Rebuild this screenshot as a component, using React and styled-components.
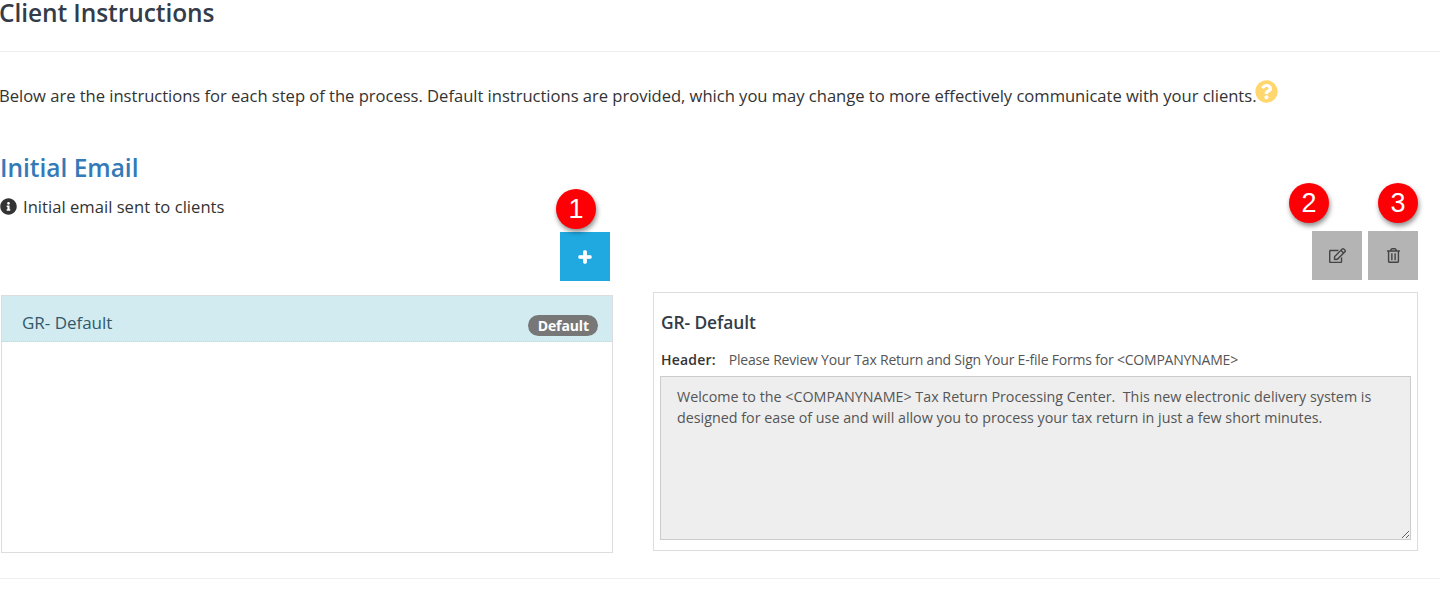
import React from 'react';
import styled, { createGlobalStyle } from 'styled-components';
import { FaInfoCircle, FaPlus, FaQuestionCircle, FaRegEdit, FaRegTrashAlt } from 'react-icons/fa';

const GlobalStyle = createGlobalStyle`
  html, body {
    margin: 0;
    padding: 0;
    background: #fff;
    overflow: hidden;
  }
  body {
    font-family: "Open Sans", "Noto Sans", sans-serif;
    color: #333;
  }
`;

const Page = styled.div`
  width: 1440px;
  height: 616px;
  overflow: hidden;
`;

const PageHeader = styled.div`
  height: 51px;
  border-bottom: 1px solid #eee;
`;

const PageTitle = styled.h3`
  margin: 0 0 0 -1px;
  font-size: 24.5px;
  font-weight: 600;
  line-height: 26px;
  letter-spacing: -0.08px;
  color: #333c48;
`;

const Intro = styled.p`
  display: flex;
  align-items: flex-start;
  margin: 0 0 0 -1px;
  padding-top: 31px;
  height: 68px;
  box-sizing: content-box;
  font-size: 16.6px;
  line-height: 26px;
  letter-spacing: -0.03px;
  white-space: nowrap;
  color: #333;
`;

const HelpIcon = styled(FaQuestionCircle)`
  margin: -3px 0 0 -1px;
  font-size: 23px;
  color: #ffd76e;
`;

const SectionTitle = styled.h3`
  margin: 0;
  font-size: 24.5px;
  font-weight: 600;
  line-height: 34px;
  letter-spacing: -0.02px;
  color: #337ab7;
`;

const Columns = styled.div`
  display: grid;
  grid-template-columns: 613px 765px;
  column-gap: 40px;
`;

const LeftColumn = styled.div`
  display: flex;
  flex-direction: column;
`;

const RightColumn = styled.div`
  display: flex;
  flex-direction: column;
  padding-top: 46px;
`;

const InfoLine = styled.div`
  display: flex;
  align-items: center;
  gap: 6px;
  height: 26px;
  margin: 8px 0 13px;
  font-size: 16.6px;
  letter-spacing: 0.02px;
  color: #333;
`;

const InfoIcon = styled(FaInfoCircle)`
  font-size: 17px;
  color: #333;
`;

const Toolbar = styled.div`
  display: flex;
  justify-content: flex-end;
  gap: 6px;
  padding-right: ${(p) => p.$inset || 0}px;
`;

const ToolButton = styled.button`
  position: relative;
  display: flex;
  align-items: center;
  justify-content: center;
  width: 50px;
  height: 49px;
  padding: 0;
  border: none;
  color: ${(p) => (p.$primary ? '#fff' : '#444')};
  background: ${(p) => (p.$primary ? '#20a8e0' : '#b4b4b4')};
`;

const PlusIcon = styled(FaPlus)`
  font-size: 14px;
  stroke: #fff;
  stroke-width: 40;
`;

const EditIcon = styled(FaRegEdit)`
  font-size: 17px;
`;

const TrashIcon = styled(FaRegTrashAlt)`
  font-size: 15px;
`;

const StepBadge = styled.span`
  position: absolute;
  top: ${(p) => p.$top}px;
  left: ${(p) => p.$left}px;
  width: 40px;
  height: 40px;
  border-radius: 50%;
  background: #fd0006;
  color: #fff;
  font-family: "Liberation Sans", Arial, sans-serif;
  font-size: 27px;
  line-height: 40px;
  text-align: center;
  box-shadow: 1px 3px 5px rgba(0, 0, 0, 0.45);
`;

const ListBox = styled.div`
  height: 256px;
  margin: 14px 0 0 1px;
  border: 1px solid #ddd;
`;

const ListItem = styled.div`
  position: relative;
  height: 46px;
  box-sizing: border-box;
  padding: 15px 20px 0;
  background: #d1ebf0;
  border: 1px dotted #b5dbe6;
  border-width: 0 0 1px;
  font-size: 17px;
  line-height: 24px;
  letter-spacing: -0.02px;
  color: #31596a;
`;

const DefaultTag = styled.span`
  position: absolute;
  right: 14px;
  top: 19px;
  height: 21px;
  padding: 0 9px 0 10px;
  border-radius: 11px;
  background: #777;
  color: #fff;
  font-size: 14px;
  font-weight: 700;
  line-height: 21px;
  letter-spacing: -0.1px;
`;

const DetailBox = styled.div`
  height: 259px;
  margin-top: 12px;
  box-sizing: border-box;
  padding: 17px 6px 10px;
  border: 1px solid #ddd;
`;

const DetailTitle = styled.h4`
  margin: 0;
  padding-left: 1px;
  font-size: 17.4px;
  font-weight: 600;
  line-height: 24px;
  letter-spacing: -0.1px;
  color: #333c48;
`;

const HeaderRow = styled.div`
  display: flex;
  gap: 13px;
  margin-top: 16px;
  padding-left: 1px;
  font-size: 14px;
  line-height: 20px;
  letter-spacing: -0.2px;
  white-space: nowrap;
  color: #555;
`;

const HeaderLabel = styled.strong`
  font-weight: 600;
  letter-spacing: 0.2px;
  color: #333;
`;

const MessageArea = styled.textarea`
  display: block;
  width: 751px;
  height: 164px;
  margin-top: 6px;
  box-sizing: border-box;
  padding: 9px 16px;
  border: 1px solid #ccc;
  border-radius: 0;
  outline: none;
  background: #eee;
  color: #555;
  font-family: "Open Sans", "Noto Sans", sans-serif;
  font-size: 14.3px;
  line-height: 21px;
  resize: both;
`;

const BottomRule = styled.hr`
  margin: 25px 0 0;
  border: none;
  border-top: 1px solid #eee;
`;

const message =
  'Welcome to the <COMPANYNAME> Tax Return Processing Center.  This new electronic delivery system is designed for ease of use and will allow you to process your tax return in just a few short minutes.';

export default function App() {
  return (
    <Page>
      <GlobalStyle />
      <PageHeader>
        <PageTitle>Client Instructions</PageTitle>
      </PageHeader>
      <Intro>
        Below are the instructions for each step of the process. Default instructions are provided, which you may change to more effectively communicate with your clients.
        <HelpIcon />
      </Intro>
      <SectionTitle>Initial Email</SectionTitle>
      <Columns>
        <LeftColumn>
          <InfoLine>
            <InfoIcon />
            Initial email sent to clients
          </InfoLine>
          <Toolbar $inset={3}>
            <ToolButton $primary>
              <StepBadge $top={-43} $left={-4}>1</StepBadge>
              <PlusIcon />
            </ToolButton>
          </Toolbar>
          <ListBox>
            <ListItem>
              GR- Default
              <DefaultTag>Default</DefaultTag>
            </ListItem>
          </ListBox>
        </LeftColumn>
        <RightColumn>
          <Toolbar>
            <ToolButton>
              <StepBadge $top={-48} $left={-23}>2</StepBadge>
              <EditIcon />
            </ToolButton>
            <ToolButton>
              <StepBadge $top={-48} $left={10}>3</StepBadge>
              <TrashIcon />
            </ToolButton>
          </Toolbar>
          <DetailBox>
            <DetailTitle>GR- Default</DetailTitle>
            <HeaderRow>
              <HeaderLabel>Header:</HeaderLabel>
              Please Review Your Tax Return and Sign Your E-file Forms for &lt;COMPANYNAME&gt;
            </HeaderRow>
            <MessageArea readOnly value={message} />
          </DetailBox>
        </RightColumn>
      </Columns>
      <BottomRule />
    </Page>
  );
}
